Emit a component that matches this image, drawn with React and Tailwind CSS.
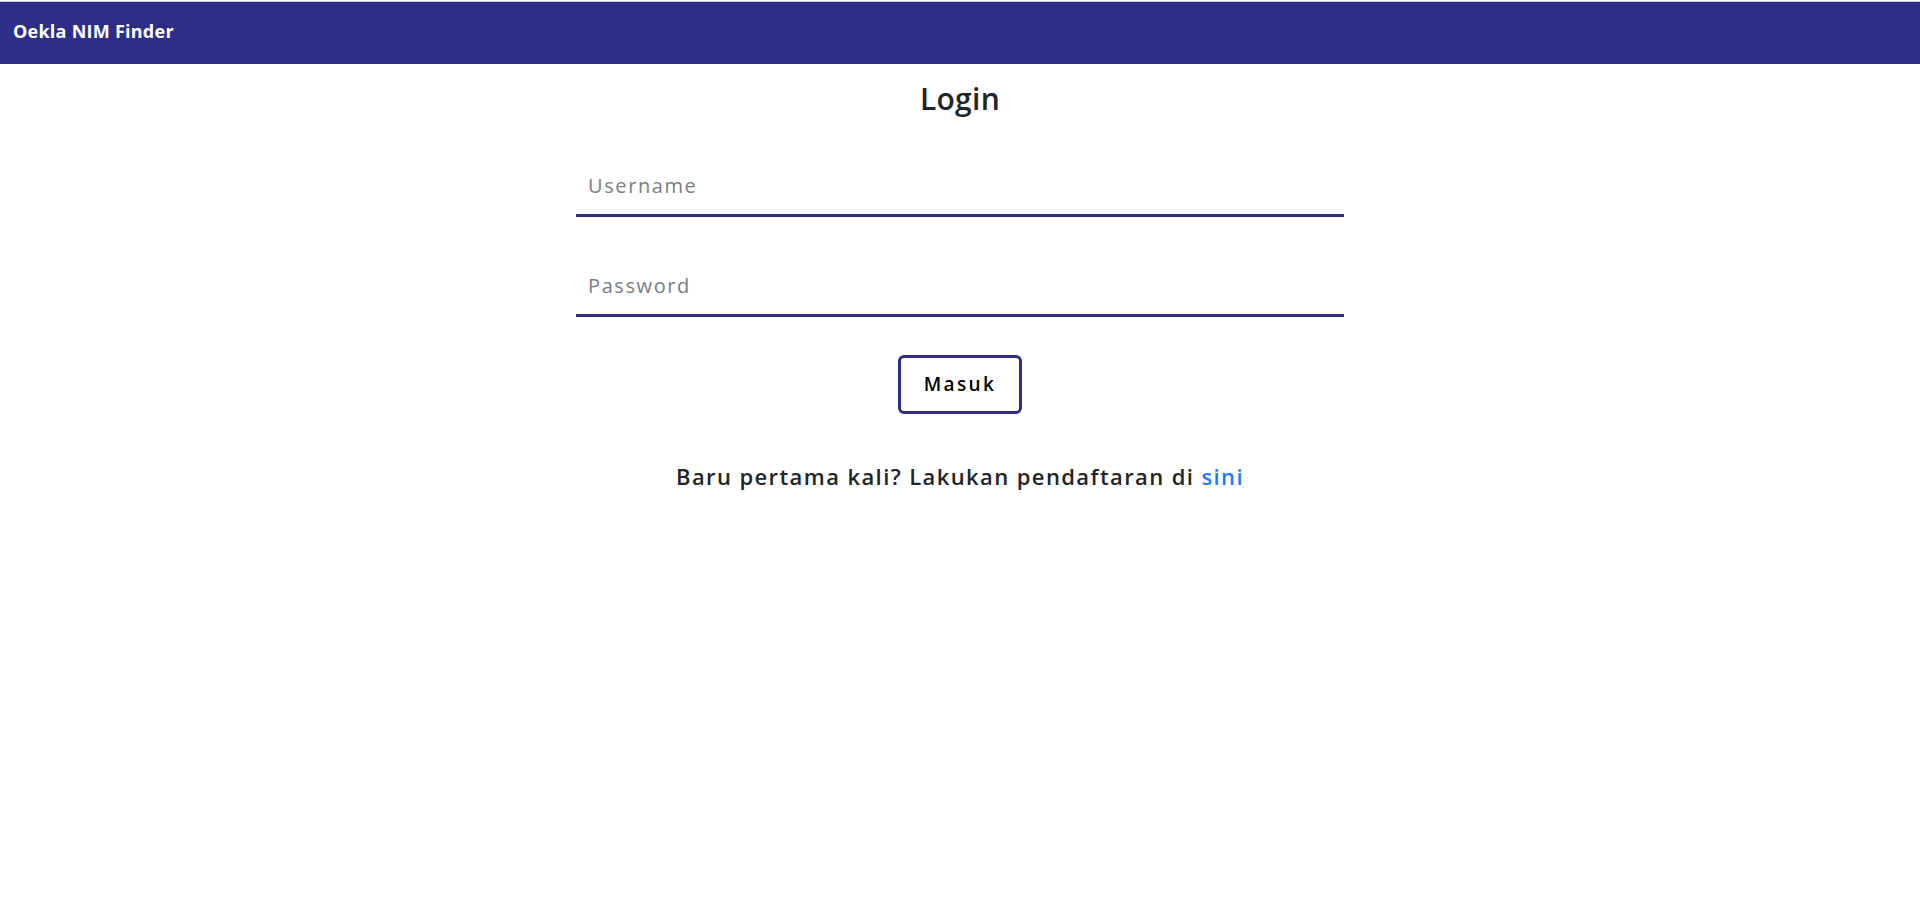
export default function App() {
  const font = { fontFamily: '"Open Sans", "Noto Sans", sans-serif' };
  return (
    <div className="min-h-[901px] bg-white" style={font}>
      <div className="h-px bg-white" />
      <div className="h-px bg-[#c9c9d6]" />
      <header className="h-[62px] bg-[#2e2d88] px-[13px] pt-[17px]">
        <span className="text-[18px] leading-[24px] font-bold tracking-[0.25px] text-white">Oekla NIM Finder</span>
      </header>
      <main className="flex flex-col items-center">
        <h1 className="mt-[17px] text-[30px] leading-[36px] font-semibold tracking-[0.3px] text-[#212529]">Login</h1>
        <form className="w-[768px] flex flex-col items-center" onSubmit={(e) => e.preventDefault()}>
          <input
            type="text"
            placeholder="Username"
            className="mt-[40px] w-full h-[60px] box-border border-0 border-b-[3px] border-[#2e2d88] bg-transparent pl-[12px] text-[20px] tracking-[1.6px] text-[#212529] outline-none placeholder:text-[#7a7d82]"
          />
          <input
            type="password"
            placeholder="Password"
            className="mt-[40px] w-full h-[60px] box-border border-0 border-b-[3px] border-[#2e2d88] bg-transparent pl-[12px] text-[20px] tracking-[1.6px] text-[#212529] outline-none placeholder:text-[#7a7d82]"
          />
          <button
            type="submit"
            className="mt-[38px] w-[124px] h-[59px] box-border border-[3px] border-[#2e2d88] rounded-[6px] bg-white text-[19px] font-semibold tracking-[2.4px] text-black"
          >
            Masuk
          </button>
        </form>
        <p className="mt-[46px] text-[22px] leading-[33px] font-semibold tracking-[1.4px] text-[#212529]">
          Baru pertama kali? Lakukan pendaftaran di <a href="#" className="text-[#1a7cfb] font-semibold">sini</a>
        </p>
      </main>
    </div>
  );
}
